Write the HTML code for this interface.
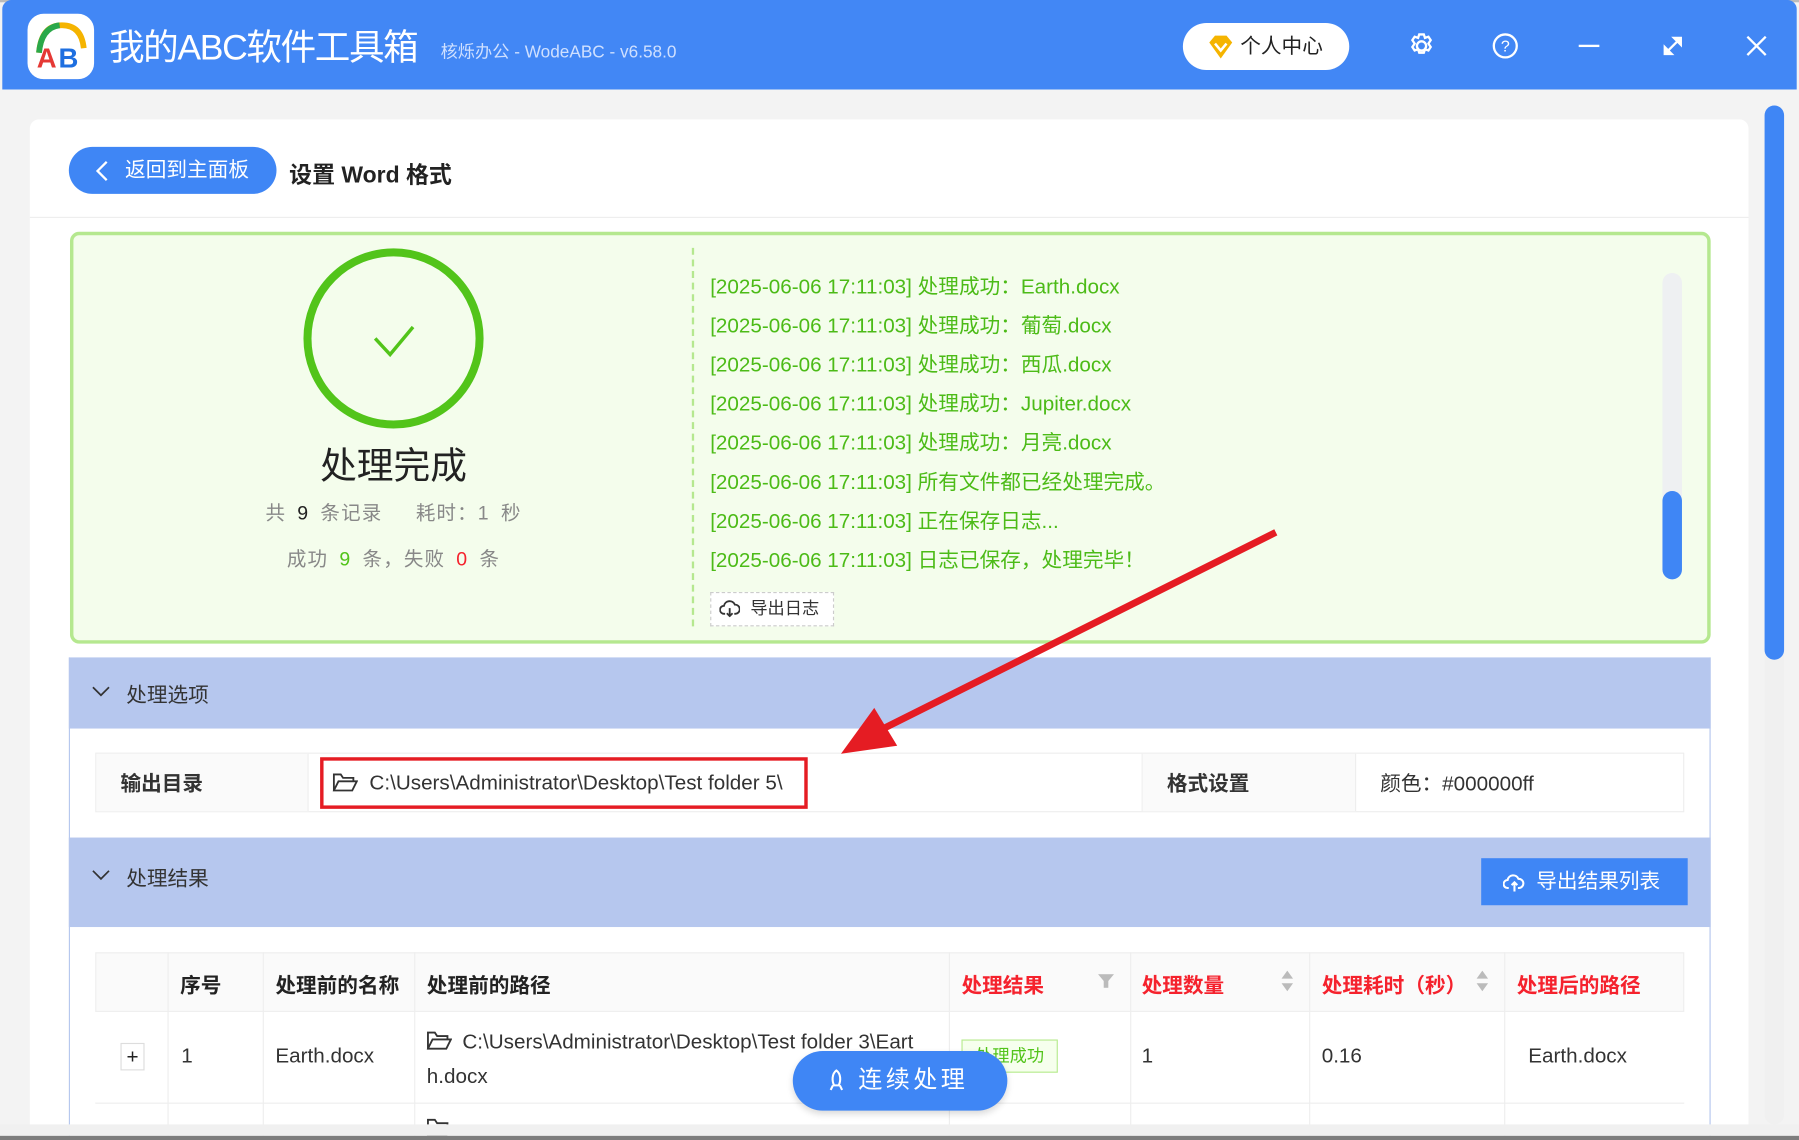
<!DOCTYPE html>
<html><head><meta charset="utf-8"><style>
*{margin:0;padding:0;box-sizing:border-box}
html,body{width:1799px;height:1140px;overflow:hidden;background:#c8c8c8}
#w{position:absolute;left:0;top:0;width:1568px;height:994px;transform:scale(1.14732);transform-origin:0 0;font-family:"Liberation Sans","Noto Sans CJK SC",sans-serif;background:#f3f3f3;overflow:hidden}
.a{position:absolute}
.tb{left:2px;top:0;width:1564px;height:78px;background:#4287f5;border-radius:8px 8px 0 0}
.cell{position:absolute;top:0;height:100%;display:flex;align-items:center;font-size:18px;color:#333;border-right:1px solid #eee}
.log{position:absolute;left:619px;font-size:18px;color:#4cbb17}
</style></head><body><div id="w">
<div class="a" style="left:0;top:0;width:1568px;height:2px;background:#bbb"></div>
<div class="a tb"></div>
<div class="a" style="left:24px;top:12px;width:58px;height:57px;background:#fff;border-radius:14px"></div>
<svg class="a" style="left:24px;top:12px" width="58" height="57" viewBox="0 0 58 57"><path d="M10 34 Q12 10 30 10 Q47 10 49 30" fill="none" stroke="#f5b400" stroke-width="5"/><path d="M10 34 Q12 12 28 10" fill="none" stroke="#2aa84a" stroke-width="5"/><text x="8" y="47" font-size="24" font-weight="bold" fill="#e53935" font-family="Liberation Sans">A</text><text x="27" y="47" font-size="24" font-weight="bold" fill="#1e6fe0" font-family="Liberation Sans">B</text></svg>
<div class="a" style="left:95px;top:22px;font-size:31px;color:#fff;line-height:40px;letter-spacing:-1.2px">我的ABC软件工具箱</div>
<div class="a" style="left:384px;top:34px;font-size:15px;color:#cfe0ff">核烁办公 - WodeABC - v6.58.0</div>
<div class="a" style="left:1031px;top:20px;width:145px;height:41px;background:#fff;border-radius:21px;font-size:18px;color:#222;line-height:41px;padding-left:50px">个人中心</div>
<svg class="a" style="left:1052px;top:30px" width="24" height="22" viewBox="0 0 24 22"><path d="M2 7 L7 1 H17 L22 7 L12 21 Z" fill="#f5b400"/><path d="M7 8 L12 14 L17 8" fill="none" stroke="#fff" stroke-width="2.2"/></svg>
<svg class="a" style="left:1226px;top:27px" width="26" height="26" viewBox="0 0 26 26" fill="none" stroke="#fff" stroke-width="2"><circle cx="13" cy="13" r="4"/><path d="M11 3h4l1 3 3-1 2 3-2 3 2 3-2 3-3-1-1 3h-4l-1-3-3 1-2-3 2-3-2-3 2-3 3 1z"/></svg>
<svg class="a" style="left:1300px;top:28px" width="24" height="24" viewBox="0 0 24 24" fill="none" stroke="#fff" stroke-width="2"><circle cx="12" cy="12" r="10"/><text x="12" y="17" font-size="14" fill="#fff" stroke="none" text-anchor="middle" font-family="Liberation Sans">?</text></svg>
<div class="a" style="left:1376px;top:39px;width:18px;height:2px;background:#fff"></div>
<svg class="a" style="left:1448px;top:30px" width="20" height="20" viewBox="0 0 20 20" stroke="#fff" stroke-width="2" fill="#fff"><path d="M4 16 L16 4"/><path d="M11 3h6v6z"/><path d="M3 11v6h6z"/></svg>
<svg class="a" style="left:1522px;top:31px" width="18" height="18" stroke="#fff" stroke-width="2"><path d="M1 1L17 17M17 1L1 17"/></svg>

<div class="a" style="left:26px;top:104px;width:1498px;height:900px;background:#fff;border-radius:8px"></div>
<div class="a" style="left:26px;top:189px;width:1498px;height:1px;background:#eee"></div>
<div class="a" style="left:60px;top:128px;width:181px;height:41px;background:#3f86f5;border-radius:21px;color:#fff;font-size:18px;line-height:41px;padding-left:49px">返回到主面板</div>
<svg class="a" style="left:83px;top:140px" width="12" height="18" stroke="#fff" stroke-width="2" fill="none"><path d="M10 1L2 9L10 17"/></svg>
<div class="a" style="left:252px;top:136px;font-size:20px;font-weight:bold;color:#222">设置 Word 格式</div>

<div class="a" style="left:1538px;top:92px;width:17px;height:888px;background:#f0f0f0;border-radius:9px"></div>
<div class="a" style="left:1538px;top:92px;width:17px;height:483px;background:#3f86f5;border-radius:9px"></div>

<div class="a" style="left:61px;top:202px;width:1430px;height:359px;background:#f4fdec;border:3px solid #b5e88f;border-radius:8px"></div>
<svg class="a" style="left:263px;top:215px" width="160" height="160"><circle cx="80" cy="80" r="75" fill="none" stroke="#52c41a" stroke-width="7"/><path d="M64 80 L77 94 L97 70" fill="none" stroke="#52c41a" stroke-width="3"/></svg>
<div class="a" style="left:243px;top:381px;width:200px;text-align:center;font-size:32px;color:#222">处理完成</div>
<div class="a" style="left:193px;top:433px;width:300px;text-align:center;font-size:17px;color:#888;word-spacing:4px;letter-spacing:1px">共 <span style="color:#222">9</span> 条记录 &nbsp; 耗时：1 秒</div>
<div class="a" style="left:193px;top:473px;width:300px;text-align:center;font-size:17px;color:#888;word-spacing:4px;letter-spacing:1px">成功 <span style="color:#52c41a">9</span> 条，失败 <span style="color:#f5222d">0</span> 条</div>
<div class="a" style="left:603px;top:216px;height:330px;border-left:2px dashed #b5e88f"></div>
<div class="log" style="top:236px">[2025-06-06 17:11:03] 处理成功：Earth.docx</div>
<div class="log" style="top:270px">[2025-06-06 17:11:03] 处理成功：葡萄.docx</div>
<div class="log" style="top:304px">[2025-06-06 17:11:03] 处理成功：西瓜.docx</div>
<div class="log" style="top:338px">[2025-06-06 17:11:03] 处理成功：Jupiter.docx</div>
<div class="log" style="top:372px">[2025-06-06 17:11:03] 处理成功：月亮.docx</div>
<div class="log" style="top:406px">[2025-06-06 17:11:03] 所有文件都已经处理完成。</div>
<div class="log" style="top:440px">[2025-06-06 17:11:03] 正在保存日志...</div>
<div class="log" style="top:474px">[2025-06-06 17:11:03] 日志已保存，处理完毕！</div>
<div class="a" style="left:619px;top:516px;width:108px;height:30px;border:1px dashed #ccc;background:#fff;font-size:15px;color:#333;line-height:28px;padding-left:34px">导出日志</div>
<svg class="a" style="left:627px;top:522px" width="18" height="16" fill="none" stroke="#333" stroke-width="1.6"><path d="M5 13H4a3.5 3.5 0 0 1 0-7 5 5 0 0 1 9.5-1 3.5 3.5 0 0 1 0.5 8h-1M9 8v7M6.5 12.5L9 15l2.5-2.5"/></svg>
<div class="a" style="left:1449px;top:238px;width:17px;height:267px;background:#eef0f2;border-radius:9px"></div>
<div class="a" style="left:1449px;top:428px;width:17px;height:77px;background:#3f86f5;border-radius:9px"></div>

<div class="a" style="left:60px;top:573px;width:1431px;height:420px;border:1px solid #b6c7ee;border-top:none;background:#fff"></div>
<div class="a" style="left:60px;top:573px;width:1431px;height:62px;background:#b6c7ee"></div>
<svg class="a" style="left:80px;top:598px" width="16" height="10" fill="none" stroke="#333" stroke-width="1.5"><path d="M1 1l7 7 7-7"/></svg>
<div class="a" style="left:110px;top:592px;font-size:18px;color:#333">处理选项</div>
<div class="a" style="left:83px;top:656px;width:1385px;height:52px;border:1px solid #eee">
<div class="cell" style="left:0;width:185px;background:#fafafa;padding-left:21px;font-weight:bold">输出目录</div>
<div class="cell" style="left:185px;width:727px;padding-left:53px">C:\Users\Administrator\Desktop\Test folder 5\</div>
<div class="cell" style="left:912px;width:186px;background:#fafafa;padding-left:21px;font-weight:bold">格式设置</div>
<div class="cell" style="left:1098px;width:287px;padding-left:21px;border:none">颜色：#000000ff</div>
</div>
<svg class="a" style="left:290px;top:673px" width="22" height="18" fill="none" stroke="#333" stroke-width="1.6"><path d="M1 16V2h6l2 3h9v3M1 16l4-8h16l-4 8z"/></svg>
<div class="a" style="left:279px;top:660px;width:425px;height:45px;border:3px solid #e51c23"></div>

<div class="a" style="left:60px;top:730px;width:1431px;height:78px;background:#b6c7ee"></div>
<svg class="a" style="left:80px;top:758px" width="16" height="10" fill="none" stroke="#333" stroke-width="1.5"><path d="M1 1l7 7 7-7"/></svg>
<div class="a" style="left:110px;top:752px;font-size:18px;color:#333">处理结果</div>
<div class="a" style="left:1291px;top:748px;width:180px;height:41px;background:#3f86f5;color:#fff;font-size:18px;line-height:41px;padding-left:48px">导出结果列表</div>
<svg class="a" style="left:1310px;top:760px" width="20" height="18" fill="none" stroke="#fff" stroke-width="1.8"><path d="M5 14H4a3.5 3.5 0 0 1 0-7 5 5 0 0 1 9.5-1 3.5 3.5 0 0 1 0.5 8h-1M10 9v8M7.5 11.5L10 9l2.5 2.5"/></svg>

<div class="a" style="left:83px;top:830px;width:1385px;height:52px;background:#fafafa;border:1px solid #eee"></div>
<div class="a" style="left:83px;top:882px;width:1385px;height:80px;border-bottom:1px solid #eee"></div>
<div class="a" style="left:83px;top:830px;width:1385px;height:170px">
<div class="a" style="left:63px;top:0;width:1px;height:170px;background:#eee"></div>
<div class="a" style="left:146px;top:0;width:1px;height:170px;background:#eee"></div>
<div class="a" style="left:278px;top:0;width:1px;height:170px;background:#eee"></div>
<div class="a" style="left:744px;top:0;width:1px;height:170px;background:#eee"></div>
<div class="a" style="left:902px;top:0;width:1px;height:170px;background:#eee"></div>
<div class="a" style="left:1058px;top:0;width:1px;height:170px;background:#eee"></div>
<div class="a" style="left:1228px;top:0;width:1px;height:170px;background:#eee"></div>
</div>
<div class="a" style="top:845px;left:157px;font-size:18px;font-weight:bold;color:#222">序号</div>
<div class="a" style="top:845px;left:240px;font-size:18px;font-weight:bold;color:#222">处理前的名称</div>
<div class="a" style="top:845px;left:372px;font-size:18px;font-weight:bold;color:#222">处理前的路径</div>
<div class="a" style="top:845px;left:838px;font-size:18px;font-weight:bold;color:#f5222d">处理结果</div>
<div class="a" style="top:845px;left:995px;font-size:18px;font-weight:bold;color:#f5222d">处理数量</div>
<div class="a" style="top:845px;left:1152px;font-size:18px;font-weight:bold;color:#f5222d">处理耗时（秒）</div>
<div class="a" style="top:845px;left:1322px;font-size:18px;font-weight:bold;color:#f5222d">处理后的路径</div>
<svg class="a" style="left:957px;top:849px" width="14" height="12"><path d="M0 0h14l-5 6v6h-4V6z" fill="#bbb"/></svg>
<svg class="a" style="left:1116px;top:846px" width="12" height="18" fill="#bbb"><path d="M6 0l5 7H1zM6 18l5-7H1z"/></svg>
<svg class="a" style="left:1286px;top:846px" width="12" height="18" fill="#bbb"><path d="M6 0l5 7H1zM6 18l5-7H1z"/></svg>
<div class="a" style="left:105px;top:909px;width:21px;height:24px;border:1px solid #ddd;font-size:18px;line-height:22px;text-align:center;color:#222">+</div>
<div class="a" style="top:910px;left:158px;font-size:18px;color:#333">1</div>
<div class="a" style="top:910px;left:240px;font-size:18px;color:#333">Earth.docx</div>
<svg class="a" style="left:372px;top:898px" width="22" height="18" fill="none" stroke="#333" stroke-width="1.6"><path d="M1 16V2h6l2 3h9v3M1 16l4-8h16l-4 8z"/></svg>
<div class="a" style="top:893px;left:372px;width:436px;font-size:18px;color:#333;line-height:30px;text-indent:31px;word-break:break-all">C:\Users\Administrator\Desktop\Test folder 3\Earth.docx</div>
<svg class="a" style="left:372px;top:974px" width="22" height="18" fill="none" stroke="#333" stroke-width="1.6"><path d="M1 16V2h6l2 3h9v3M1 16l4-8h16l-4 8z"/></svg>
<div class="a" style="left:838px;top:906px;width:84px;height:29px;background:#f6ffed;border:1px solid #b7eb8f;color:#52c41a;font-size:15px;line-height:27px;text-align:center">处理成功</div>
<div class="a" style="top:910px;left:995px;font-size:18px;color:#333">1</div>
<div class="a" style="top:910px;left:1152px;font-size:18px;color:#333">0.16</div>
<div class="a" style="top:910px;left:1332px;font-size:18px;color:#333">Earth.docx</div>
<div class="a" style="left:691px;top:916px;width:187px;height:52px;background:#3f86f5;border-radius:26px;color:#fff;font-size:21px;line-height:52px;padding-left:57px;letter-spacing:3px;box-shadow:0 3px 6px rgba(0,0,0,.15)">连续处理</div>
<svg class="a" style="left:720px;top:932px" width="18" height="20" fill="none" stroke="#fff" stroke-width="1.8"><path d="M9 1c4 3 4 9 2 13H7C5 10 5 4 9 1zM6 14l-2 4M12 14l2 4"/></svg>

<svg class="a" style="left:0;top:0" width="1568" height="994"><path d="M1112 464 L760 640" stroke="#e51c23" stroke-width="6"/><path d="M733 657 L762 617 L782 650 Z" fill="#e51c23"/></svg>
<div class="a" style="left:0;top:980px;width:1568px;height:10px;background:#f0f0f0"></div>
<div class="a" style="left:0;top:990px;width:1568px;height:4px;background:#7d7d7d"></div>
</div></body></html>
